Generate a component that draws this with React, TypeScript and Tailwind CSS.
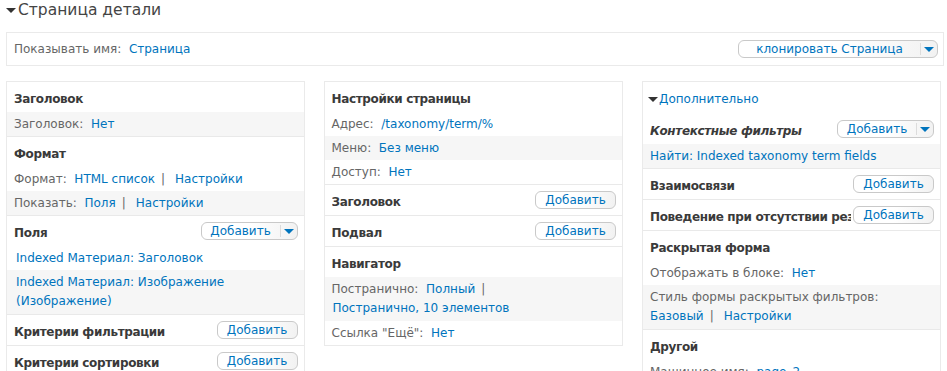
import React from 'react'

const font = "font-['DejaVu_Sans','Verdana',sans-serif]"

function Caret({ className = '' }: { className?: string }) {
  return (
    <svg width="10" height="5" viewBox="0 0 10 5" className={className}>
      <path d="M0 0h10L5 5z" fill="currentColor" />
    </svg>
  )
}

function Btn({ label = 'Добавить', dropdown = false, w }: { label?: string; dropdown?: boolean; w: string }) {
  return (
    <div
      className={`flex h-[18px] shrink-0 items-stretch rounded-[6px] border border-[#c9c9c9] bg-gradient-to-r from-white via-white to-[#f2f2f2] text-[12px] leading-none text-[#0074bd] ${w}`}
    >
      <span className="flex flex-1 items-center justify-center">{label}</span>
      {dropdown && (
        <span className="my-[2px] flex w-[17px] items-center justify-center border-l border-[#dcdcdc]">
          <Caret className="text-[#0074bd]" />
        </span>
      )}
    </div>
  )
}

function Heading({
  children,
  button,
  italic = false,
}: {
  children: React.ReactNode
  button?: React.ReactNode
  italic?: boolean
}) {
  return (
    <div className="flex h-[30px] items-center gap-[2px] pl-[7px] pr-[6px]">
      <span
        className={`min-w-0 flex-1 overflow-hidden whitespace-nowrap pt-[3px] font-bold tracking-[-0.35px] text-[#3a3a3a] ${italic ? 'italic' : ''}`}
      >
        {children}
      </span>
      {button}
    </div>
  )
}

function Row({ children, gray = false, multi = false }: { children: React.ReactNode; gray?: boolean; multi?: boolean }) {
  return (
    <div
      className={`px-[7px] py-[3px] ${multi ? 'leading-[19px]' : 'leading-[18px]'} ${gray ? 'bg-[#f6f6f6]' : ''}`}
    >
      {children}
    </div>
  )
}

function L({ children }: { children: React.ReactNode }) {
  return <span className="text-[#0074bd]">{children}</span>
}

function Sep() {
  return <span className="ml-[6px] mr-[10px] text-[#666]">|</span>
}

function Section({ children, last = false }: { children: React.ReactNode; last?: boolean }) {
  return <div className={last ? '' : 'border-b border-[#e9e9e9]'}>{children}</div>
}

function Column({ children, w }: { children: React.ReactNode; w: string }) {
  return <div className={`border border-[#eaeaea] bg-white ${w}`}>{children}</div>
}

export default function App() {
  return (
    <div className={`${font} h-[371px] w-[947px] overflow-hidden bg-white text-[12px] text-[#666]`}>
      <div className="flex h-[32px] items-start pl-[6px] pt-[1px]">
        <div className="flex items-center text-[15.5px] leading-[19px] text-[#444]">
          <Caret className="mr-[2px] text-[#333]" />
          <span>Страница детали</span>
        </div>
      </div>

      <div className="mx-[6px] flex h-[34px] w-[938px] items-center justify-between border border-[#eaeaea] pl-[7px] pr-[5px]">
        <div>
          Показывать имя:&nbsp; <L>Страница</L>
        </div>
        <Btn label="клонировать Страница" dropdown w="w-[200px]" />
      </div>

      <div className="mt-[15px] flex items-start gap-[19px] px-[6px]">
        <Column w="w-[300px]">
          <Section>
            <Heading>Заголовок</Heading>
            <Row gray>
              Заголовок:&nbsp; <L>Нет</L>
            </Row>
          </Section>
          <Section>
            <Heading>Формат</Heading>
            <Row>
              Формат:&nbsp; <L>HTML список</L>
              <Sep />
              <L>Настройки</L>
            </Row>
            <Row gray>
              Показать:&nbsp; <L>Поля</L>
              <Sep />
              <L>Настройки</L>
            </Row>
          </Section>
          <Section>
            <Heading button={<Btn dropdown w="w-[97px]" />}>Поля</Heading>
            <Row>
              <div className="pl-[2px]">
                <L>Indexed Материал: Заголовок</L>
              </div>
            </Row>
            <Row gray multi>
              <div className="pl-[2px]">
                <L>
                  Indexed Материал: Изображение
                  <br />
                  (Изображение)
                </L>
              </div>
            </Row>
          </Section>
          <Section>
            <Heading button={<Btn w="w-[81px]" />}>Критерии фильтрации</Heading>
          </Section>
          <Section last>
            <Heading button={<Btn w="w-[81px]" />}>Критерии сортировки</Heading>
          </Section>
        </Column>

        <Column w="w-[301px]">
          <Section>
            <Heading>Настройки страницы</Heading>
            <Row>
              Адрес:&nbsp; <L>/taxonomy/term/%</L>
            </Row>
            <Row gray>
              Меню:&nbsp; <L>Без меню</L>
            </Row>
            <Row>
              Доступ:&nbsp; <L>Нет</L>
            </Row>
          </Section>
          <Section>
            <Heading button={<Btn w="w-[81px]" />}>Заголовок</Heading>
          </Section>
          <Section>
            <Heading button={<Btn w="w-[81px]" />}>Подвал</Heading>
          </Section>
          <Section last>
            <Heading>Навигатор</Heading>
            <Row gray multi>
              Постранично:&nbsp; <L>Полный</L>
              <Sep />
              <br />
              <span className="pl-[1px]">
                <L>Постранично, 10 элементов</L>
              </span>
            </Row>
            <Row>
              Ссылка "Ещё":&nbsp; <L>Нет</L>
            </Row>
          </Section>
        </Column>

        <Column w="w-[299px]">
          <Section>
            <div className="flex h-[32px] items-center pl-[5px] pt-[2px] text-[#0074bd]">
              <Caret className="mr-[1px] text-[#333]" />
              <span>Дополнительно</span>
            </div>
            <Heading italic button={<Btn dropdown w="w-[97px]" />}>
              Контекстные фильтры
            </Heading>
            <Row gray>
              <L>Найти: Indexed taxonomy term fields</L>
            </Row>
          </Section>
          <Section>
            <Heading button={<Btn w="w-[81px]" />}>Взаимосвязи</Heading>
          </Section>
          <Section>
            <Heading button={<Btn w="w-[81px]" />}>Поведение при отсутствии результатов</Heading>
          </Section>
          <Section>
            <Heading>Раскрытая форма</Heading>
            <Row>
              Отображать в блоке:&nbsp; <L>Нет</L>
            </Row>
            <Row gray multi>
              Стиль формы раскрытых фильтров:
              <br />
              <L>Базовый</L>
              <Sep />
              <L>Настройки</L>
            </Row>
          </Section>
          <Section last>
            <Heading>Другой</Heading>
            <Row>
              Машинное имя:&nbsp; <L>page_2</L>
            </Row>
          </Section>
        </Column>
      </div>
    </div>
  )
}
